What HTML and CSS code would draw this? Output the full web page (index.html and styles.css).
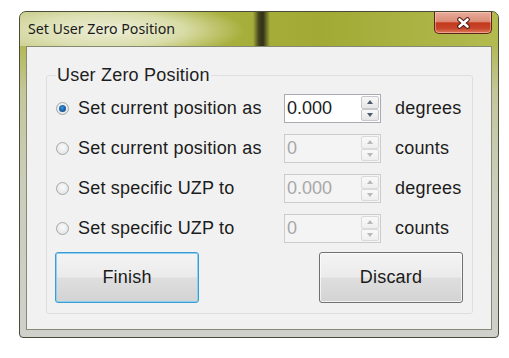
FILE: index.html
```html
<!DOCTYPE html>
<html lang="en">
<head>
<meta charset="utf-8">
<title>Set User Zero Position</title>
<link rel="stylesheet" href="styles.css">
</head>
<body>
<div class="window">
  <div class="titlebar">
    <span class="title">Set User Zero Position</span>
    <button class="close" aria-label="Close">
      <svg width="15" height="12" viewBox="0 0 15 12">
        <path d="M3.5 2.5 L11.5 9.5 M11.5 2.5 L3.5 9.5" stroke="#4a1d14" stroke-width="4.6" stroke-linecap="round" fill="none"/>
        <path d="M3.5 2.5 L11.5 9.5 M11.5 2.5 L3.5 9.5" stroke="#ffffff" stroke-width="2.6" stroke-linecap="round" fill="none"/>
      </svg>
    </button>
  </div>
  <div class="client">
    <fieldset class="group">
      <legend>User Zero Position</legend>
      <div class="rows">
        <div class="opt"><span class="radio checked"></span><span>Set current position as</span></div>
        <div class="spin"><span class="val">0.000</span><span class="btns"><span class="sb up"></span><span class="sb down"></span></span></div>
        <span class="unit">degrees</span>

        <div class="opt"><span class="radio"></span><span>Set current position as</span></div>
        <div class="spin disabled"><span class="val">0</span><span class="btns"><span class="sb up"></span><span class="sb down"></span></span></div>
        <span class="unit">counts</span>

        <div class="opt"><span class="radio"></span><span>Set specific UZP to</span></div>
        <div class="spin disabled"><span class="val">0.000</span><span class="btns"><span class="sb up"></span><span class="sb down"></span></span></div>
        <span class="unit">degrees</span>

        <div class="opt"><span class="radio"></span><span>Set specific UZP to</span></div>
        <div class="spin disabled"><span class="val">0</span><span class="btns"><span class="sb up"></span><span class="sb down"></span></span></div>
        <span class="unit">counts</span>
      </div>
      <div class="actions">
        <button class="btn btn-default">Finish</button>
        <button class="btn">Discard</button>
      </div>
    </fieldset>
  </div>
</div>
</body>
</html>
```

FILE: styles.css
```css
html, body {
  margin: 0;
  padding: 0;
  background: #ffffff;
}

body {
  font-family: "Liberation Sans", Arial, sans-serif;
  color: #1c1c1c;
}

.window {
  box-sizing: border-box;
  width: 480px;
  height: 327px;
  margin: 11px 0 0 19px;
  padding: 0 6px 7px;
  border: 1px solid #4a4c38;
  border-radius: 7px 7px 4px 4px;
  display: flex;
  flex-direction: column;
  background: linear-gradient(180deg, #a8b03e 0px, #b3b956 34px, #c4c79a 80px, #cbcdbb 170px, #d0d0cc 100%);
}

.titlebar {
  height: 34px;
  margin: 0 -6px;
  padding: 0 6px;
  display: flex;
  justify-content: space-between;
  align-items: flex-start;
  border-radius: 6px 6px 0 0;
  background:
    linear-gradient(90deg, rgba(60,58,30,0) 233px, rgba(48,46,24,0.85) 239px, rgba(40,38,20,0.92) 243px, rgba(60,58,30,0) 250px),
    radial-gradient(ellipse 135px 30px at 90px 18px, rgba(238,239,218,0.97) 0%, rgba(228,231,194,0.78) 55%, rgba(220,224,170,0) 100%),
    linear-gradient(90deg, #c6ca86 0px, #aab13e 175px, #a2aa35 300px, #b3ba4f 100%);
}

.title {
  margin: 7px 0 0 2px;
  font-family: "Noto Sans", "Open Sans", sans-serif;
  font-size: 14.2px;
  line-height: 20px;
  color: #1a1a1a;
}

.close {
  width: 58px;
  height: 22px;
  margin: 0;
  padding: 0;
  border: 1px solid #5e2418;
  border-top: none;
  border-radius: 0 0 5px 5px;
  display: flex;
  align-items: center;
  justify-content: center;
  background: linear-gradient(180deg, #e9ab9a 0%, #dc8e79 45%, #c3391c 52%, #c8452a 78%, #de7d5c 100%);
  box-shadow: inset 0 0 0 1px rgba(255,220,200,0.45);
}

.client {
  box-sizing: border-box;
  height: 284px;
  border: 1px solid #868a72;
  background: #f1f1f1;
  padding: 18px 18px 0 19px;
}

.group {
  box-sizing: border-box;
  width: 427px;
  margin: 0;
  padding: 9px 9px 10px 9px;
  border: 1px solid #dcdfe0;
  border-radius: 3px;
}

.group legend {
  padding: 0 1px;
  font-size: 18px;
  line-height: 20px;
  letter-spacing: 0.2px;
  color: #1e1e1e;
}

.rows {
  display: grid;
  grid-template-columns: 228px 97px auto;
  grid-auto-rows: 29px;
  row-gap: 11px;
  align-items: center;
  font-size: 18px;
  letter-spacing: 0.2px;
}

.opt {
  display: flex;
  align-items: center;
  gap: 9px;
}

.radio {
  box-sizing: border-box;
  width: 13px;
  height: 13px;
  border-radius: 50%;
  border: 1px solid #a4a6a8;
  background: radial-gradient(circle at 50% 40%, #fbfbfb 0%, #e6e7e8 70%, #d9dadb 100%);
  display: flex;
  align-items: center;
  justify-content: center;
}

.radio.checked::after {
  content: "";
  width: 7px;
  height: 7px;
  border-radius: 50%;
  background: radial-gradient(circle at 45% 40%, #3f98d8 0%, #1660a4 55%, #0d3f78 100%);
}

.unit {
  margin-left: 14px;
}

.spin {
  box-sizing: border-box;
  height: 29px;
  display: flex;
  border: 1px solid #a9abb0;
  background: #ffffff;
}

.val {
  flex: 1;
  padding-left: 2px;
  line-height: 27px;
  letter-spacing: 0;
  color: #1a1a22;
}

.btns {
  width: 18px;
  margin: 1px 1px 1px 0;
  display: flex;
  flex-direction: column;
}

.sb {
  box-sizing: border-box;
  flex: 1;
  border: 1px solid #c6c8cc;
  border-radius: 2px;
  background: linear-gradient(180deg, #f8f8f8 0%, #e6e6e6 100%);
  display: flex;
  align-items: center;
  justify-content: center;
}

.sb::before {
  content: "";
  width: 0;
  height: 0;
  border-left: 3px solid transparent;
  border-right: 3px solid transparent;
}

.sb.up::before {
  border-bottom: 4px solid #4e5a6c;
}

.sb.down::before {
  border-top: 4px solid #4e5a6c;
}

.spin.disabled {
  border-color: #cbcccd;
  background: #f4f4f4;
}

.spin.disabled .val {
  color: #a8a8a8;
}

.spin.disabled .sb {
  border-color: #dadada;
  background: linear-gradient(180deg, #f9f9f9 0%, #efefef 100%);
}

.spin.disabled .sb.up::before {
  border-bottom-color: #b8b8b8;
}

.spin.disabled .sb.down::before {
  border-top-color: #b8b8b8;
}

.actions {
  display: flex;
  justify-content: space-between;
  margin-top: 9px;
}

.btn {
  box-sizing: border-box;
  width: 144px;
  height: 51px;
  margin: 0;
  padding: 0;
  font-family: "Liberation Sans", Arial, sans-serif;
  font-size: 18px;
  letter-spacing: 0.2px;
  color: #1a1a1a;
  border: 1px solid #707070;
  border-radius: 3px;
  background: linear-gradient(180deg, #f4f4f4 0%, #ebebeb 48%, #dedede 52%, #d3d3d3 100%);
  box-shadow: inset 0 0 0 1px rgba(255,255,255,0.7);
}

.btn-default {
  margin-left: -1px;
  border-color: #3c9bd2;
  box-shadow: inset 0 0 0 1px #8fd0f0;
}
```
